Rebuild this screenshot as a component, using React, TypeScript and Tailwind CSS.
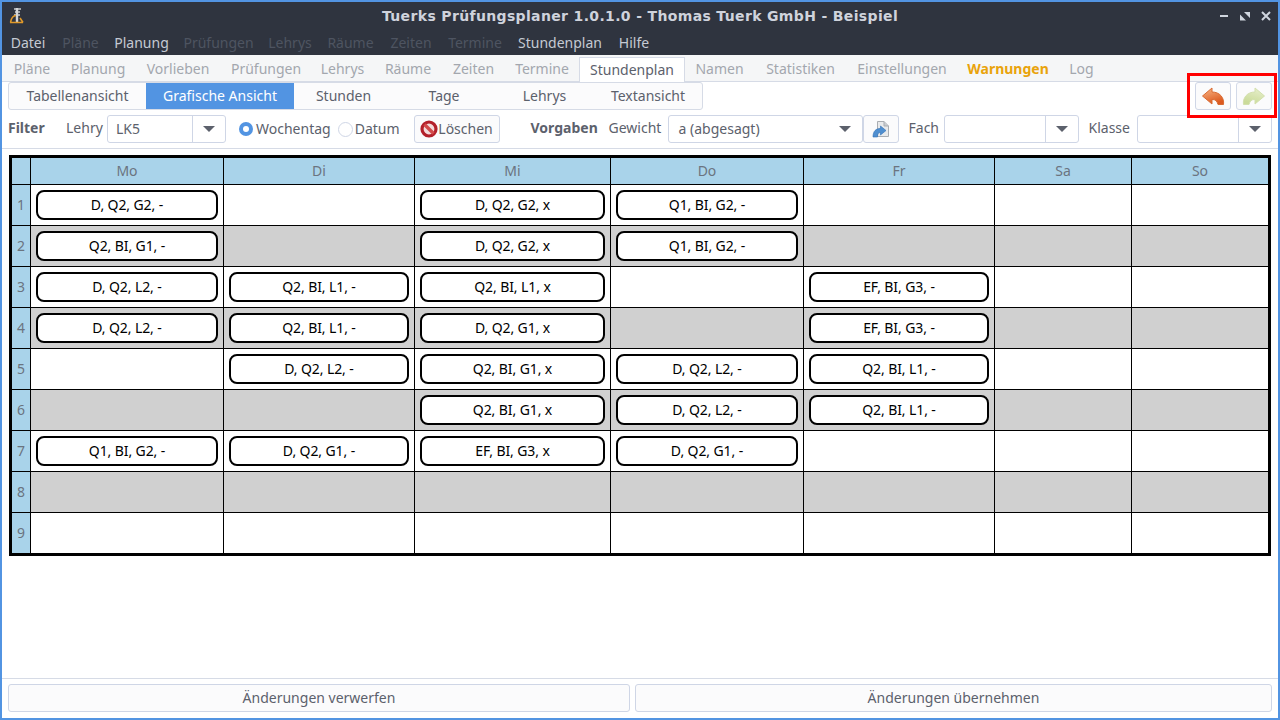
import React from "react";

const menu = [
  { t: "Datei", w: "w-[52px]", c: "text-[#c5cad3]" },
  { t: "Pläne", w: "w-[53px]", c: "text-[#4e5461]" },
  { t: "Planung", w: "w-[69px]", c: "text-[#c5cad3]" },
  { t: "Prüfungen", w: "w-[85px]", c: "text-[#4e5461]" },
  { t: "Lehrys", w: "w-[58px]", c: "text-[#4e5461]" },
  { t: "Räume", w: "w-[63px]", c: "text-[#4e5461]" },
  { t: "Zeiten", w: "w-[58px]", c: "text-[#4e5461]" },
  { t: "Termine", w: "w-[70px]", c: "text-[#4e5461]" },
  { t: "Stundenplan", w: "w-[100px]", c: "text-[#c5cad3]" },
  { t: "Hilfe", w: "w-[48px]", c: "text-[#c5cad3]" },
];

const tabs = [
  { t: "Pläne", w: "w-[58px]" },
  { t: "Planung", w: "w-[74px]" },
  { t: "Vorlieben", w: "w-[86px]" },
  { t: "Prüfungen", w: "w-[90px]" },
  { t: "Lehrys", w: "w-[63px]" },
  { t: "Räume", w: "w-[68px]" },
  { t: "Zeiten", w: "w-[63px]" },
  { t: "Termine", w: "w-[74px]" },
  { t: "Stundenplan", w: "w-[106px]", active: true },
  { t: "Namen", w: "w-[69px]" },
  { t: "Statistiken", w: "w-[93px]" },
  { t: "Einstellungen", w: "w-[110px]" },
  { t: "Warnungen", w: "w-[102px]", warn: true },
  { t: "Log", w: "w-[45px]" },
];

const sub = [
  { t: "Tabellenansicht", w: "w-[137px]" },
  { t: "Grafische Ansicht", w: "w-[148px]", active: true },
  { t: "Stunden", w: "w-[99px]" },
  { t: "Tage", w: "w-[102px]" },
  { t: "Lehrys", w: "w-[99px]" },
  { t: "Textansicht", w: "w-[108px]" },
];

const days = ["Mo", "Di", "Mi", "Do", "Fr", "Sa", "So"];

const grid: (string | null)[][] = [
  ["D, Q2, G2, -", null, "D, Q2, G2, x", "Q1, BI, G2, -", null, null, null],
  ["Q2, BI, G1, -", null, "D, Q2, G2, x", "Q1, BI, G2, -", null, null, null],
  ["D, Q2, L2, -", "Q2, BI, L1, -", "Q2, BI, L1, x", null, "EF, BI, G3, -", null, null],
  ["D, Q2, L2, -", "Q2, BI, L1, -", "D, Q2, G1, x", null, "EF, BI, G3, -", null, null],
  [null, "D, Q2, L2, -", "Q2, BI, G1, x", "D, Q2, L2, -", "Q2, BI, L1, -", null, null],
  [null, null, "Q2, BI, G1, x", "D, Q2, L2, -", "Q2, BI, L1, -", null, null],
  ["Q1, BI, G2, -", "D, Q2, G1, -", "EF, BI, G3, x", "D, Q2, G1, -", null, null, null],
  [null, null, null, null, null, null, null],
  [null, null, null, null, null, null, null],
];

function Combo({ value, w, divider = true, pad = "pl-2" }: { value: string; w: string; divider?: boolean; pad?: string }) {
  return (
    <div className={`${w} h-[28px] flex items-center border border-[#cfd6e6] rounded-[3px] bg-white`}>
      <span className={`flex-1 ${pad} pb-[2px] text-[#5c616c]`}>{value}</span>
      <span className={`w-[33px] h-full flex items-center justify-center ${divider ? "border-l border-[#cfd6e6]" : ""}`}>
        <span className="w-0 h-0 border-l-[6px] border-r-[6px] border-t-[6px] border-l-transparent border-r-transparent border-t-[#5c616c]" />
      </span>
    </div>
  );
}

function Undo({ faded }: { faded?: boolean }) {
  const id = faded ? "g2" : "g1";
  return (
    <svg width="24" height="19" viewBox="0 0 24 19" className={faded ? "-scale-x-100" : ""}>
      <defs>
        <linearGradient id={id} x1="0" y1="0" x2="0.4" y2="1">
          <stop offset="0" stopColor={faded ? "#e8f0cc" : "#f8b888"} />
          <stop offset="1" stopColor={faded ? "#c6d890" : "#dc5a20"} />
        </linearGradient>
      </defs>
      <path
        d="M11 1 L1.5 9 L11 17 L11 12.5 C14.5 12.3 16 14 17 17.5 L22.5 17.5 C23.5 10.5 18.5 5 11 5 Z"
        fill={`url(#${id})`}
        stroke={faded ? "#cfdda6" : "#d96b33"}
        strokeWidth="1"
        strokeLinejoin="round"
      />
    </svg>
  );
}

function Forbidden() {
  return (
    <svg width="18" height="18" viewBox="0 0 18 18">
      <circle cx="9" cy="9" r="7" fill="#f3dcdc" stroke="#b3202a" strokeWidth="3.2" />
      <path d="M4.5 4.5 L13.5 13.5" stroke="#d24a4a" strokeWidth="3.4" />
    </svg>
  );
}

function DocIcon() {
  return (
    <svg width="20" height="20" viewBox="0 0 20 20">
      <path d="M6.5 2.5 H13 L17.5 7 V17.5 H6.5 Z" fill="#e8eaec" stroke="#a9adb2" strokeWidth="1" />
      <path d="M13 2.5 V7 H17.5" fill="#c9ccd0" stroke="#a9adb2" strokeWidth="1" />
      <path d="M2 18 C2 12 5 9.5 9.5 9.5 V7 L15 11.5 L9.5 16 V13.5 C7 13.5 6.5 15 6.5 18 Z" fill="#4f8fd0" stroke="#2f6fb5" strokeWidth="0.6" />
    </svg>
  );
}

function AppIcon() {
  return (
    <svg width="16" height="18" viewBox="0 0 16 18">
      <path d="M5 2 H12 M6 5 H11 M5 8 H11" stroke="#c9cbce" strokeWidth="1.4" />
      <path d="M8 1 V15" stroke="#d4d6d8" strokeWidth="2.4" />
      <path d="M1.5 15.5 C2.5 10 5 8.5 7 8.5 M1 15.5 H14 M11 11 L14 15.5" stroke="#e0992a" strokeWidth="1.6" fill="none" />
    </svg>
  );
}

const btn = "border border-[#cfd6e6] rounded-[3px] bg-[#fbfbfc] flex items-center justify-center";

export default function App() {
  return (
    <div
      className="relative w-[1280px] h-[720px] overflow-hidden flex flex-col bg-white border-x-2 border-t-2 border-b-2 border-[#5294e2] text-[14px] text-[#5c616c]"
      style={{ fontFamily: '"Noto Sans", sans-serif' }}
    >
      {/* title */}
      <div className="h-[28px] shrink-0 bg-[#2f343f] flex items-center">
        <div className="w-[70px] pl-[7px] flex items-center"><AppIcon /></div>
        <div
          className="flex-1 text-center text-[14px] font-bold text-[#cfd3dc] tracking-[0.35px]"
          style={{ fontFamily: '"DejaVu Sans", sans-serif' }}
        >
          Tuerks Prüfungsplaner 1.0.1.0 - Thomas Tuerk GmbH - Beispiel
        </div>
        <div className="w-[70px] flex items-center justify-end gap-[11px] pr-[7px]">
          <svg width="10" height="10" viewBox="0 0 10 10"><path d="M1 5 H9" stroke="#cfd5de" strokeWidth="2" /></svg>
          <svg width="10" height="10" viewBox="0 0 10 10"><path d="M4 1 H10 V7 Z M0 3.5 V9.5 H6 Z" fill="#cfd5de" /></svg>
          <svg width="10" height="10" viewBox="0 0 10 10"><path d="M1 1 L9 9 M9 1 L1 9" stroke="#cfd5de" strokeWidth="2" /></svg>
        </div>
      </div>
      {/* menu */}
      <div className="h-[25px] shrink-0 bg-[#2f343f] flex items-center">
        {menu.map((m) => (
          <span key={m.t} className={`${m.w} text-center ${m.c}`}>{m.t}</span>
        ))}
      </div>
      {/* tabs */}
      <div className="h-[27px] shrink-0 bg-[#f5f6f7] border-b border-[#d6dbe6] flex pl-px pt-[2px]">
        {tabs.map((t) => (
          <span
            key={t.t}
            className={`${t.w} flex items-center justify-center pb-[2px] ${
              t.active
                ? "bg-white border border-b-0 border-[#d6dbe6] text-[#5c616c] h-[25px]"
                : t.warn
                ? "font-bold text-[#e9a30c]"
                : "text-[#a3a7ae]"
            }`}
          >
            {t.t}
          </span>
        ))}
      </div>
      {/* sub tabs + undo */}
      <div className="h-[32px] shrink-0 flex items-start justify-between pl-[6px] pr-[5px]">
        <div className="flex h-[28px] border border-[#d6dbe6] rounded-[3px] bg-[#fbfbfc] overflow-hidden">
          {sub.map((s) => (
            <span
              key={s.t}
              className={`${s.w} flex items-center justify-center pb-[2px] ${s.active ? "bg-[#5294e2] text-white" : ""}`}
            >
              {s.t}
            </span>
          ))}
        </div>
        <div className="flex gap-[5px] mr-[1px]">
          <button className={`${btn} w-[36px] h-[28px]`}><Undo /></button>
          <button className={`${btn} w-[36px] h-[28px] opacity-90`}><Undo faded /></button>
        </div>
      </div>
      {/* filter */}
      <div className="h-[35px] shrink-0 border-b border-[#d6dbe6] flex items-start pl-[6px] pt-[1px]">
        <b className="w-[58px] h-[28px] leading-[26px]">Filter</b>
        <span className="w-[41px] h-[28px] leading-[26px]">Lehry</span>
        <Combo value="LK5" w="w-[119px]" />
        <span className="ml-[13px] h-[28px] flex items-center gap-[3px]">
          <span className="w-[14px] h-[14px] rounded-full bg-[#5294e2] flex items-center justify-center">
            <span className="w-[6px] h-[6px] rounded-full bg-white" />
          </span>
          <span className="pb-[2px]">Wochentag</span>
        </span>
        <span className="ml-[7px] h-[28px] flex items-center gap-[2px]">
          <span className="w-[15px] h-[15px] rounded-full border border-[#cfd6e6] bg-white" />
          <span className="pb-[2px]">Datum</span>
        </span>
        <button className={`${btn} ml-[14px] w-[86px] h-[28px]`}>
          <Forbidden />
          <span className="pb-[2px]">Löschen</span>
        </button>
        <b className="ml-[31px] w-[78px] h-[28px] leading-[26px]">Vorgaben</b>
        <span className="w-[59px] h-[28px] leading-[26px]">Gewicht</span>
        <Combo value="a (abgesagt)" w="w-[195px]" divider={false} pad="pl-[10px]" />
        <button className={`${btn} w-[36px] h-[28px]`}><DocIcon /></button>
        <span className="ml-[10px] w-[35px] h-[28px] leading-[26px]">Fach</span>
        <Combo value="" w="w-[135px]" />
        <span className="ml-[10px] w-[48px] h-[28px] leading-[26px]">Klasse</span>
        <Combo value="" w="w-[135px]" />
      </div>
      {/* table */}
      <div className="flex-1 min-h-0 pl-[7px] pt-[6px]">
        <div className="w-[1262px] grid grid-cols-[18px_192px_190px_195px_192px_190px_136px_136px] grid-rows-[26px_repeat(9,40px)] gap-px bg-black border-[3px] border-black">
          <div className="bg-[#a9d3ea]" />
          {days.map((d) => (
            <div key={d} className="bg-[#a9d3ea] flex items-center justify-center pb-[2px] text-[#6b7480]">{d}</div>
          ))}
          {grid.map((row, i) => (
            <React.Fragment key={i}>
              <div className="bg-[#a9d3ea] flex items-center justify-center pb-[2px] text-[#6b7480]">{i + 1}</div>
              {row.map((c, j) => (
                <div key={j} className={`${i % 2 === 1 ? "bg-[#d0d0d0]" : "bg-white"} p-[5px]`}>
                  {c && (
                    <div className="h-full border-2 border-black rounded-[8px] bg-white flex items-center justify-center pb-[2px] text-black tracking-[-0.1px]">
                      {c}
                    </div>
                  )}
                </div>
              ))}
            </React.Fragment>
          ))}
        </div>
      </div>
      {/* bottom */}
      <div className="h-[40px] shrink-0 border-t border-[#d6dbe6] flex gap-[5px] pl-[6px] pr-[6px] pt-[5px]">
        <button className={`${btn} w-[622px] h-[28px] pb-[2px]`}>Änderungen verwerfen</button>
        <button className={`${btn} w-[637px] h-[28px] pb-[2px]`}>Änderungen übernehmen</button>
      </div>
      {/* annotation */}
      <div className="absolute left-[1185px] top-[71px] w-[90px] h-[45px] border-[3px] border-[#ff0000] pointer-events-none" />
    </div>
  );
}
